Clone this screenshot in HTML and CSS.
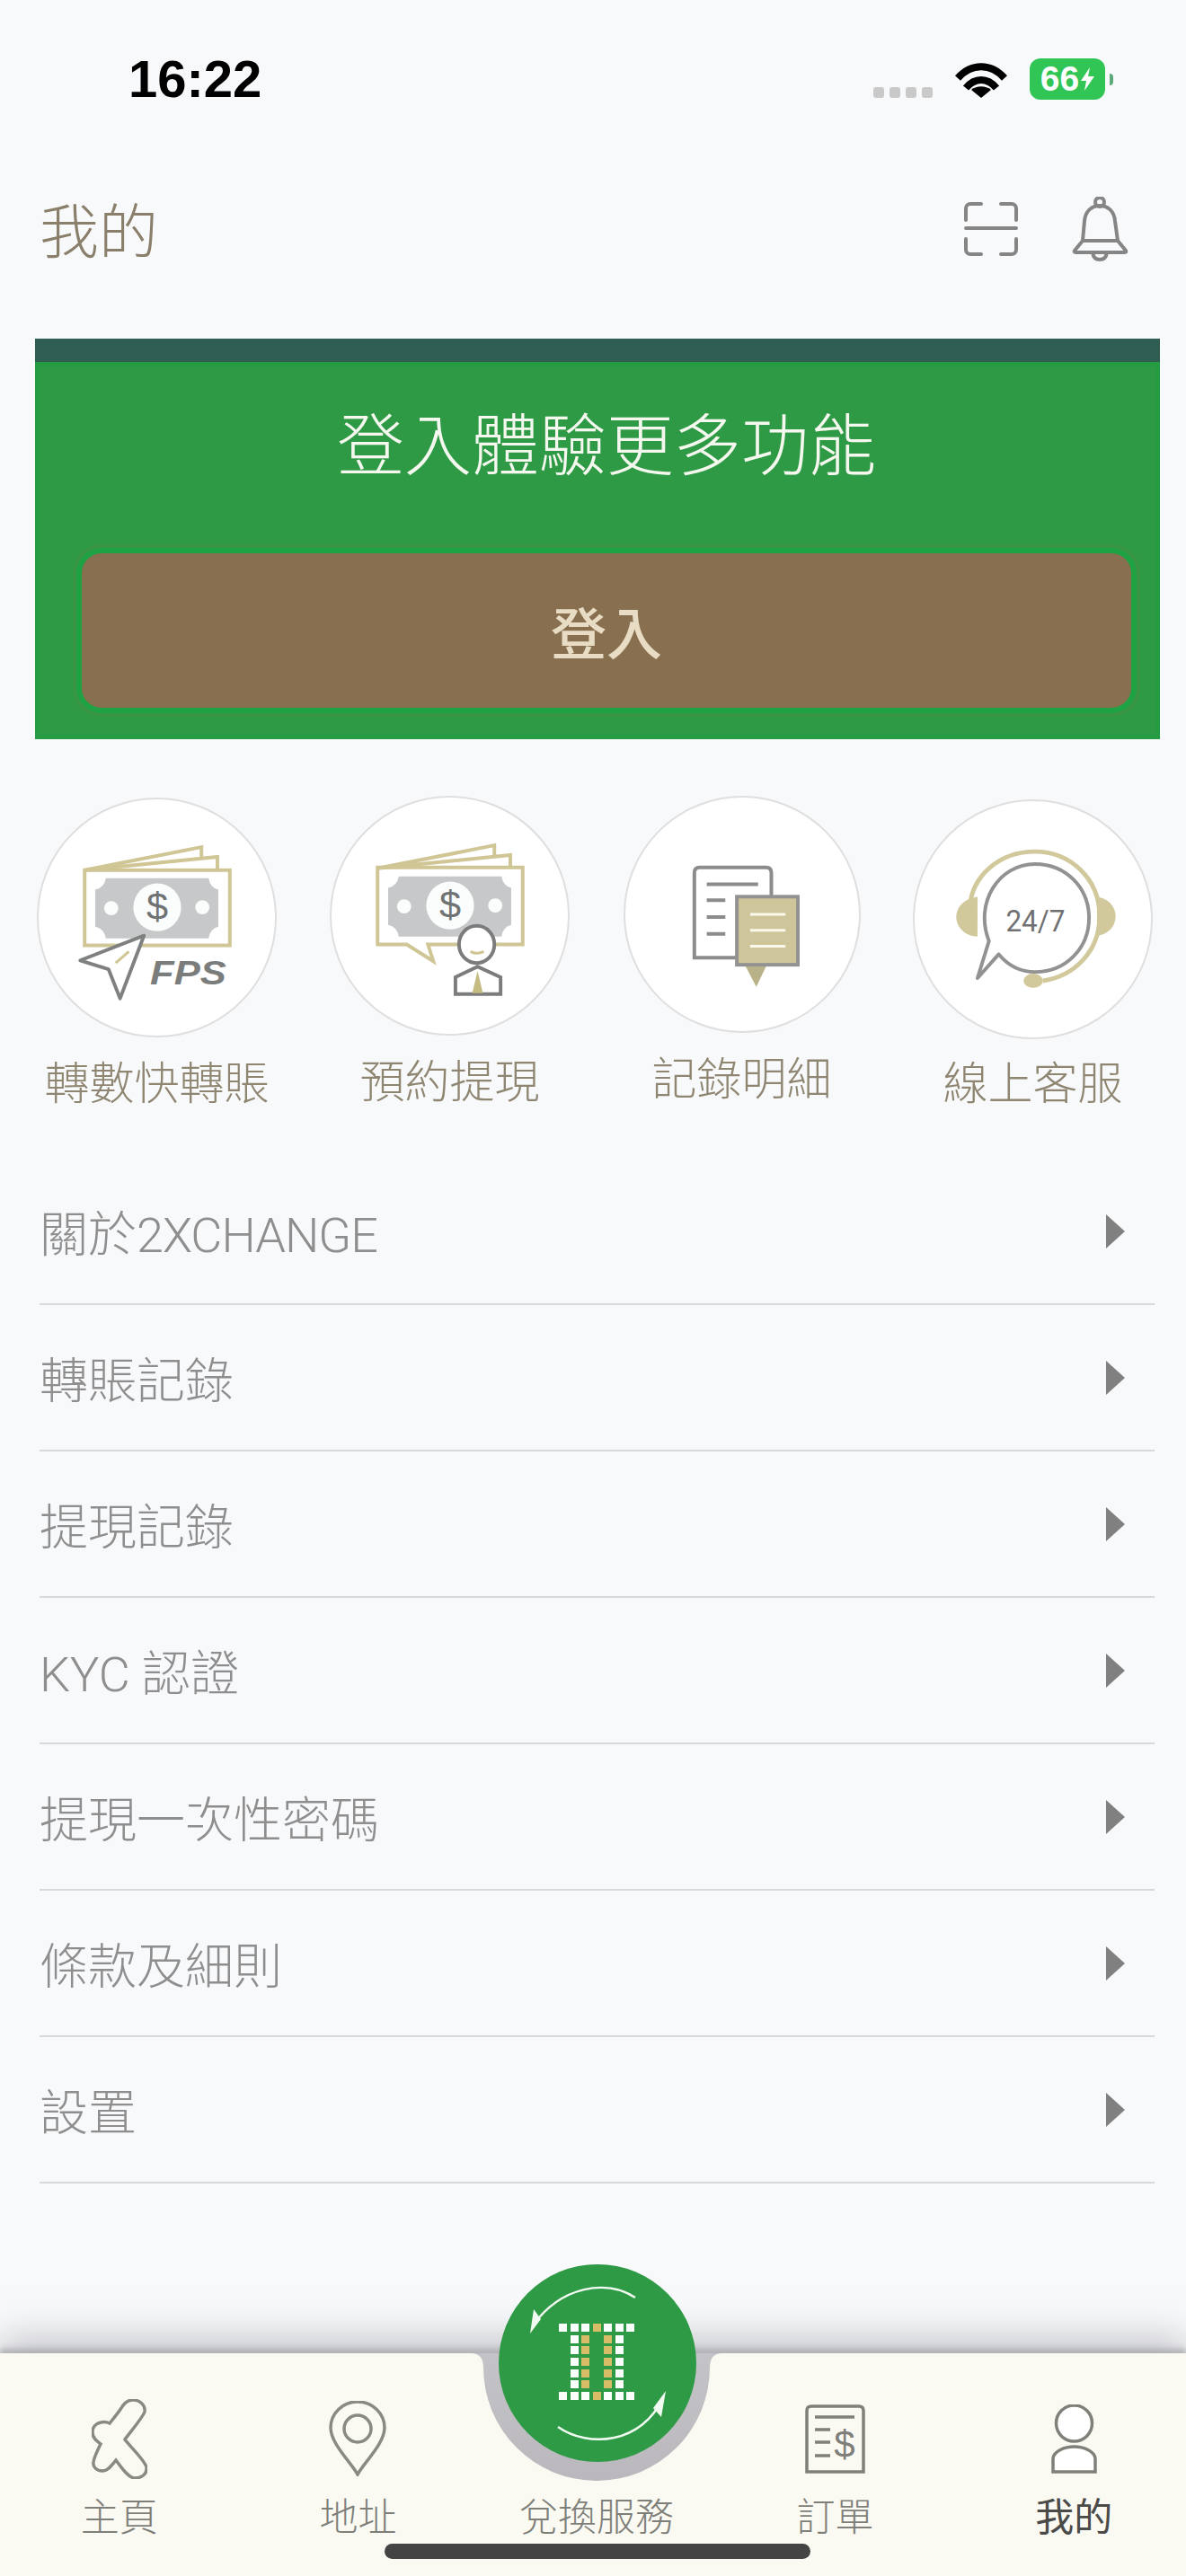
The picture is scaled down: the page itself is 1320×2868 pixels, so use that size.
FILE: index.html
```html
<!DOCTYPE html>
<html lang="zh-Hant">
<head>
    <meta charset="UTF-8">
    <meta name="viewport" content="width=device-width, initial-scale=1.0">
    <title>我的</title>
    <link rel="stylesheet" href="styles.css">
</head>
<body>
    <svg class="defs" aria-hidden="true">
        <symbol id="note" viewBox="0 0 267 267">
            <path d="M52 80 184 54V68M52 80 202 65V80" fill="none" stroke="#cfc595" stroke-width="4"/>
            <path d="M76 89H192Q194 100 203 102V144Q194 146 192 157H76Q74 146 64 144V102Q74 100 76 89Z" fill="#c6c8c9"/>
            <circle cx="134" cy="122" r="27" fill="#fbfcfc"/>
            <circle cx="82" cy="123" r="8" fill="#fbfcfc"/>
            <circle cx="185" cy="122" r="8" fill="#fbfcfc"/>
        </symbol>
    </svg>

    <div class="page">
        <div class="status-bar">
            <div class="time">16:22</div>
            <div class="status-icons">
                <div class="signal"><span></span><span></span><span></span><span></span></div>
                <svg class="wifi" viewBox="0 0 58 42">
                    <path d="M3 20C18 3 40 3 55 20" fill="none" stroke="#000" stroke-width="8"/>
                    <path d="M12 31C22 19 36 19 46 31" fill="none" stroke="#000" stroke-width="8"/>
                    <path d="M29 42 18 33C24 28 34 28 40 33Z" fill="#000"/>
                </svg>
                <div class="battery">
                    <span class="battery-body">66<svg class="bolt" viewBox="0 0 15 26"><path d="M10 0 0 15H6L4 26 15 10H8Z" fill="#fff"/></svg></span>
                    <span class="battery-nub"></span>
                </div>
            </div>
        </div>

        <div class="header">
            <div class="header-title">我的</div>
            <svg class="scan-icon" viewBox="0 0 60 60">
                <path d="M2 20V7A5 5 0 0 1 7 2H19M41 2H53A5 5 0 0 1 58 7V20M2 41V53A5 5 0 0 0 7 58H19M41 58H53A5 5 0 0 0 58 53V41M2 29H58" fill="none" stroke="#858585" stroke-width="4" stroke-linecap="round"/>
            </svg>
            <svg class="bell-icon" viewBox="0 0 64 72">
                <circle cx="31" cy="6" r="5" fill="none" stroke="#858585" stroke-width="4"/>
                <path d="M12 49 14 27C15 16 22 10 31 10C40 10 47 16 48 27L51 49M12 49H51M12 49 3 60Q2 62 5 62H58Q61 62 60 60L51 49M23 62Q24 70 31 70Q38 70 39 62" fill="none" stroke="#858585" stroke-width="4" stroke-linejoin="round"/>
            </svg>
        </div>

        <div class="banner">
            <div class="banner-body">
                <div class="banner-title">登入體驗更多功能</div>
                <button class="login-btn" type="button">登入</button>
            </div>
        </div>

        <div class="shortcuts">
            <div class="shortcut shortcut-fps">
                <div class="shortcut-circle">
                    <svg viewBox="0 0 267 267">
                        <rect x="52" y="80" width="164" height="85" fill="none" stroke="#cfc595" stroke-width="4"/>
                        <use href="#note" width="267" height="267"/>
                        <text x="134" y="136" class="note-sign">$</text>
                        <path d="M119 154 47 182 79 192 92 225Z" fill="#fff" stroke="#7f8080" stroke-width="4" stroke-linejoin="round"/>
                        <path d="M102 172 87 185" stroke="#cfc595" stroke-width="3"/>
                        <text x="126" y="209" class="fps-text" textLength="86" lengthAdjust="spacingAndGlyphs">FPS</text>
                    </svg>
                </div>
                <div class="shortcut-label">轉數快轉賬</div>
            </div>
            <div class="shortcut shortcut-book">
                <div class="shortcut-circle">
                    <svg viewBox="0 0 267 267">
                        <path d="M109 166H216V79H52V166H85L115 185Z" fill="none" stroke="#cfc595" stroke-width="4"/>
                        <use href="#note" width="267" height="267"/>
                        <text x="134" y="136" class="note-sign">$</text>
                        <ellipse cx="164" cy="166" rx="20" ry="21" fill="#fff" stroke="#7c7c7c" stroke-width="4"/>
                        <path d="M157 174Q164 178 172 174" fill="none" stroke="#cfc595" stroke-width="3"/>
                        <path d="M140 222V203L165 191 191 203V222Z" fill="#fff" stroke="#7c7c7c" stroke-width="4"/>
                        <path d="M165 196 159 221H171Z" fill="#c4bb80"/>
                    </svg>
                </div>
                <div class="shortcut-label">預約提現</div>
            </div>
            <div class="shortcut shortcut-records">
                <div class="shortcut-circle">
                    <svg viewBox="0 0 264 264">
                        <path d="M78 181V85Q78 79 84 79H159Q165 79 165 85V181Z" fill="#fff" stroke="#8c8c8c" stroke-width="4"/>
                        <path d="M92 98H150M92 116H113M92 135H113M92 154H113" stroke="#8c8c8c" stroke-width="4"/>
                        <rect x="126" y="112" width="69" height="77" fill="#cfc59a" stroke="#929292" stroke-width="4"/>
                        <path d="M136 191 148 214 159 191Z" fill="#b9b188"/>
                        <path d="M141 132H181M141 150H181M141 168H181" stroke="#fbf8ec" stroke-width="3"/>
                    </svg>
                </div>
                <div class="shortcut-label">記錄明細</div>
            </div>
            <div class="shortcut shortcut-support">
                <div class="shortcut-circle">
                    <svg viewBox="0 0 267 267">
                        <path d="M62 122C64 84 96 57 136 57C176 57 209 88 209 130C209 170 180 198 145 203" fill="none" stroke="#d1c89b" stroke-width="5"/>
                        <path d="M71 108C55 110 47 120 47 131C47 143 58 153 71 153Z" fill="#d1c89b"/>
                        <path d="M206 108C220 110 227 120 227 130C227 142 218 151 206 152Z" fill="#d1c89b"/>
                        <ellipse cx="134" cy="203" rx="11" ry="8" fill="#d1c89b"/>
                        <path d="M84 158C67 115 95 71 136 71C171 71 197 98 197 132C197 166 171 193 136 193C120 193 106 186 95 173L71 200Z" fill="#fff" stroke="#929292" stroke-width="4" stroke-linejoin="round"/>
                        <text x="103" y="147" class="support-text" textLength="67" lengthAdjust="spacingAndGlyphs">24/7</text>
                    </svg>
                </div>
                <div class="shortcut-label">線上客服</div>
            </div>
        </div>

        <div class="menu">
            <div class="menu-row"><span>關於<span class="menu-latin">2XCHANGE</span></span><i class="arrow"></i></div>
            <div class="menu-row"><span>轉賬記錄</span><i class="arrow"></i></div>
            <div class="menu-row"><span>提現記錄</span><i class="arrow"></i></div>
            <div class="menu-row"><span>KYC 認證</span><i class="arrow"></i></div>
            <div class="menu-row"><span>提現一次性密碼</span><i class="arrow"></i></div>
            <div class="menu-row"><span>條款及細則</span><i class="arrow"></i></div>
            <div class="menu-row"><span>設置</span><i class="arrow"></i></div>
        </div>

        <div class="tabbar">
            <svg class="dish" viewBox="0 0 280 142">
                <defs>
                    <linearGradient id="dishFill" x1="0" y1="0" x2="0" y2="1">
                        <stop offset="0" stop-color="#c4c3c7"/>
                        <stop offset="1" stop-color="#bab8bc"/>
                    </linearGradient>
                </defs>
                <path d="M0 0H280Q266 0 266 16A126 126 0 0 1 14 16Q14 0 0 0Z" fill="url(#dishFill)"/>
            </svg>
            <div class="exchange-btn">
                <svg viewBox="0 0 220 220">
                    <g fill="none" stroke="#f2fbf2" stroke-width="2.5">
                        <path d="M152 37C120 16 70 24 38 68"/>
                        <path d="M66 181C100 205 160 200 183 148"/>
                    </g>
                    <path d="M35 77 39 50 47 61Z" fill="#f2fbf2"/>
                    <path d="M186 141 181 170 172 160Z" fill="#f2fbf2"/>
                    <g fill="#fbfffb">
                        <rect x="67" y="66" width="9" height="9"/><rect x="80" y="66" width="9" height="9"/><rect x="92" y="66" width="9" height="9"/>
                        <rect x="117" y="66" width="9" height="9"/><rect x="130" y="66" width="9" height="9"/><rect x="142" y="66" width="9" height="9"/>
                        <rect x="80" y="79" width="9" height="9"/><rect x="130" y="79" width="9" height="9"/>
                        <rect x="80" y="91" width="9" height="9"/><rect x="130" y="91" width="9" height="9"/>
                        <rect x="80" y="104" width="9" height="9"/><rect x="130" y="104" width="9" height="9"/>
                        <rect x="80" y="117" width="9" height="9"/><rect x="130" y="117" width="9" height="9"/>
                        <rect x="80" y="129" width="9" height="9"/><rect x="130" y="129" width="9" height="9"/>
                        <rect x="67" y="142" width="9" height="9"/><rect x="80" y="142" width="9" height="9"/><rect x="92" y="142" width="9" height="9"/>
                        <rect x="117" y="142" width="9" height="9"/><rect x="130" y="142" width="9" height="9"/><rect x="142" y="142" width="9" height="9"/>
                    </g>
                    <g fill="#d9bd66">
                        <rect x="105" y="66" width="9" height="9"/><rect x="105" y="142" width="9" height="9"/>
                        <rect x="92" y="79" width="9" height="9"/><rect x="117" y="79" width="9" height="9"/>
                        <rect x="92" y="91" width="9" height="9"/><rect x="117" y="91" width="9" height="9"/>
                        <rect x="92" y="104" width="9" height="9"/><rect x="117" y="104" width="9" height="9"/>
                        <rect x="92" y="117" width="9" height="9"/><rect x="117" y="117" width="9" height="9"/>
                        <rect x="92" y="129" width="9" height="9"/><rect x="117" y="129" width="9" height="9"/>
                    </g>
                </svg>
            </div>

            <div class="tab">
                <div class="tab-icon">
                    <svg class="icon-home" viewBox="0 0 62 89">
                        <path d="M33 10C37 3 42 1 46 1C54 1 60 7 59 14C58 19 42 38 37 45C42 52 60 69 61 76C62 84 55 88 48 88C41 88 33 76 27 68C22 74 18 80 12 80C5 80 1 75 2 70C3 64 7 56 10 50C5 46 1 43 1 37C1 31 5 27 10 26C14 25 18 26 20 27C24 22 29 16 33 10Z" fill="none" stroke="#8a8a85" stroke-width="3.5"/>
                    </svg>
                </div>
                <div class="tab-label">主頁</div>
            </div>
            <div class="tab">
                <div class="tab-icon">
                    <svg class="icon-pin" viewBox="0 0 64 84">
                        <path d="M32 82C26 70 2 48 2 30A30 29 0 0 1 62 30C62 48 38 70 32 82Z" fill="none" stroke="#8a8a85" stroke-width="3.5"/>
                        <circle cx="32" cy="31" r="15" fill="none" stroke="#8a8a85" stroke-width="3.5"/>
                    </svg>
                </div>
                <div class="tab-label">地址</div>
            </div>
            <div class="tab">
                <div class="tab-icon"></div>
                <div class="tab-label">兌換服務</div>
            </div>
            <div class="tab">
                <div class="tab-icon">
                    <svg class="icon-order" viewBox="0 0 67 77">
                        <path d="M2 75V7Q2 2 7 2H60Q65 2 65 7V75Z" fill="none" stroke="#80807b" stroke-width="3.5"/>
                        <path d="M11 14H55M11 28H28M11 42H28M11 57H28" stroke="#80807b" stroke-width="3.500"/>
                        <text x="44" y="59" class="order-sign">$</text>
                    </svg>
                </div>
                <div class="tab-label">訂單</div>
            </div>
            <div class="tab tab-active">
                <div class="tab-icon">
                    <svg class="icon-user" viewBox="0 0 51 77">
                        <ellipse cx="25.5" cy="21" rx="20" ry="20" fill="#fff" stroke="#80807b" stroke-width="3.5"/>
                        <path d="M2 75V60C3 52 15 47 25.5 47C36 47 48 52 49 60V75Z" fill="#fff" stroke="#80807b" stroke-width="3.5"/>
                    </svg>
                </div>
                <div class="tab-label">我的</div>
            </div>
            <div class="home-indicator"></div>
        </div>
    </div>
</body>
</html>
```

FILE: styles.css
```css
body {
    margin: 0;
    font-family: "Noto Sans CJK TC", "Liberation Sans", sans-serif;
    background-color: #f8f9fb;
}

.defs {
    position: absolute;
    width: 0;
    height: 0;
}

.page {
    display: flex;
    flex-direction: column;
    width: 1320px;
    height: 2868px;
    overflow: hidden;
}

/* status bar */
.status-bar {
    display: flex;
    justify-content: space-between;
    padding: 59px 81px 0 143px;
}

.time {
    font-family: "Liberation Sans", sans-serif;
    font-size: 58px;
    font-weight: bold;
    line-height: 58px;
    color: #000;
}

.status-icons {
    display: flex;
    align-items: flex-end;
    gap: 25px;
    padding-bottom: 6px;
}

.signal {
    display: flex;
    gap: 6px;
    margin-bottom: 2px;
}

.signal span {
    width: 12px;
    height: 12px;
    border-radius: 3px;
    background-color: #c9c9c9;
}

.wifi {
    width: 58px;
    height: 42px;
    margin-bottom: 2px;
}

.battery {
    display: flex;
    align-items: center;
    gap: 5px;
}

.battery-body {
    display: flex;
    align-items: center;
    justify-content: center;
    gap: 2px;
    width: 84px;
    height: 46px;
    border-radius: 12px;
    background-color: #30c554;
    font-family: "Liberation Sans", sans-serif;
    font-size: 39px;
    font-weight: bold;
    color: #fff;
}

.bolt {
    width: 15px;
    height: 26px;
}

.battery-nub {
    width: 4px;
    height: 13px;
    border-radius: 0 4px 4px 0;
    background-color: #5ba878;
}

/* header */
.header {
    display: flex;
    align-items: center;
    height: 120px;
    padding: 78px 63px 62px 44px;
}

.header-title {
    flex: 1;
    padding-bottom: 4px;
    font-size: 66px;
    line-height: 66px;
    font-weight: 300;
    color: #8a7f6a;
}

.scan-icon {
    width: 60px;
    height: 60px;
    margin-right: 60px;
}

.bell-icon {
    width: 64px;
    height: 72px;
}

/* login banner */
.banner {
    margin: 0 29px 0 39px;
    border-top: 26px solid #2f5d52;
}

.banner-body {
    display: flex;
    flex-direction: column;
    align-items: center;
    padding: 48px 32px 35px 52px;
    background-color: #2f9a45;
    box-shadow: inset 0 0 0 5px #259c42;
}

.banner-title {
    font-size: 75px;
    line-height: 80px;
    font-weight: 300;
    color: #f4f8ee;
}

.login-btn {
    width: 100%;
    height: 172px;
    margin-top: 85px;
    border: none;
    border-radius: 22px;
    background-color: #886f50;
    box-shadow: 0 0 0 6px #1fa243, 0 0 0 10px #3a9645;
    font-family: inherit;
    font-size: 62px;
    font-weight: 500;
    color: #e8dcc4;
}

/* round shortcuts */
.shortcuts {
    display: flex;
    align-items: flex-start;
    margin-top: 63px;
    padding-left: 41px;
}

.shortcut {
    display: flex;
    flex-direction: column;
    align-items: center;
    width: 267px;
}

.shortcut-circle {
    box-sizing: border-box;
    width: 267px;
    height: 267px;
    border: 2px solid #dfdfdf;
    border-radius: 50%;
    background-color: #fff;
}

.shortcut-circle svg {
    display: block;
    width: 100%;
    height: 100%;
}

.shortcut-label {
    margin-top: 22px;
    font-size: 50px;
    line-height: 50px;
    font-weight: 300;
    white-space: nowrap;
    color: #8f8672;
}

.shortcut-fps {
    margin-top: 2px;
    margin-right: 59px;
}

.shortcut-book {
    margin-right: 58px;
}

.shortcut-records {
    margin-right: 57px;
}

.shortcut-records .shortcut-circle {
    width: 264px;
    height: 264px;
}

.shortcut-support {
    margin-top: 4px;
}

.shortcut-support .shortcut-label {
    margin-top: 20px;
}

.note-sign {
    font-family: "Liberation Sans", sans-serif;
    font-size: 44px;
    text-anchor: middle;
    fill: #6f7374;
}

.fps-text {
    font-family: "Liberation Sans", sans-serif;
    font-size: 37px;
    font-style: italic;
    font-weight: bold;
    fill: #7b7d7d;
}

.support-text {
    font-family: "Roboto", sans-serif;
    font-size: 33px;
    fill: #6f7172;
}

/* menu list */
.menu {
    margin: 63px 35px 0 44px;
}

.menu-row {
    display: flex;
    align-items: center;
    justify-content: space-between;
    box-sizing: border-box;
    height: 163px;
    padding-right: 33px;
    border-bottom: 2px solid #d8d9dc;
    font-family: "Roboto", "Noto Sans CJK TC", sans-serif;
    font-size: 54px;
    font-weight: 300;
    color: #8e8e8e;
}

.menu-latin {
    letter-spacing: -1px;
}

.arrow {
    width: 0;
    height: 0;
    border-top: 19px solid transparent;
    border-bottom: 19px solid transparent;
    border-left: 21px solid #808080;
}

/* bottom tab bar */
.tabbar {
    position: relative;
    display: grid;
    grid-template-columns: repeat(5, 265.6px);
    align-content: start;
    box-sizing: border-box;
    height: 248px;
    margin-top: auto;
    padding-top: 50px;
    background-color: #fafaf3;
    box-shadow: 0 -5px 6px rgba(172, 172, 177, 0.85), 0 -16px 40px rgba(150, 150, 156, 0.55);
}

.dish {
    position: absolute;
    top: 0;
    left: 524px;
    width: 280px;
    height: 142px;
}

.exchange-btn {
    position: absolute;
    top: -99px;
    left: 555px;
    width: 220px;
    height: 220px;
    border-radius: 50%;
    background-color: #2e9a46;
}

.exchange-btn svg {
    display: block;
    width: 100%;
    height: 100%;
}

.tab {
    display: flex;
    flex-direction: column;
    align-items: center;
}

.tab-icon {
    display: flex;
    align-items: center;
    justify-content: center;
    height: 90px;
}

.tab-label {
    margin-top: 17px;
    font-size: 43px;
    line-height: 44px;
    font-weight: 300;
    white-space: nowrap;
    color: #7f7f7a;
}

.tab-active .tab-label {
    font-weight: 400;
    color: #4a4a48;
}

.icon-home {
    width: 62px;
    height: 89px;
}

.icon-pin {
    width: 64px;
    height: 84px;
}

.icon-order {
    width: 67px;
    height: 77px;
}

.icon-user {
    width: 51px;
    height: 77px;
}

.order-sign {
    font-family: "Liberation Sans", sans-serif;
    font-size: 42px;
    text-anchor: middle;
    fill: #7e7e7a;
}

.home-indicator {
    position: absolute;
    bottom: 19px;
    left: 428px;
    width: 474px;
    height: 17px;
    border-radius: 9px;
    background-color: #444;
}
```
